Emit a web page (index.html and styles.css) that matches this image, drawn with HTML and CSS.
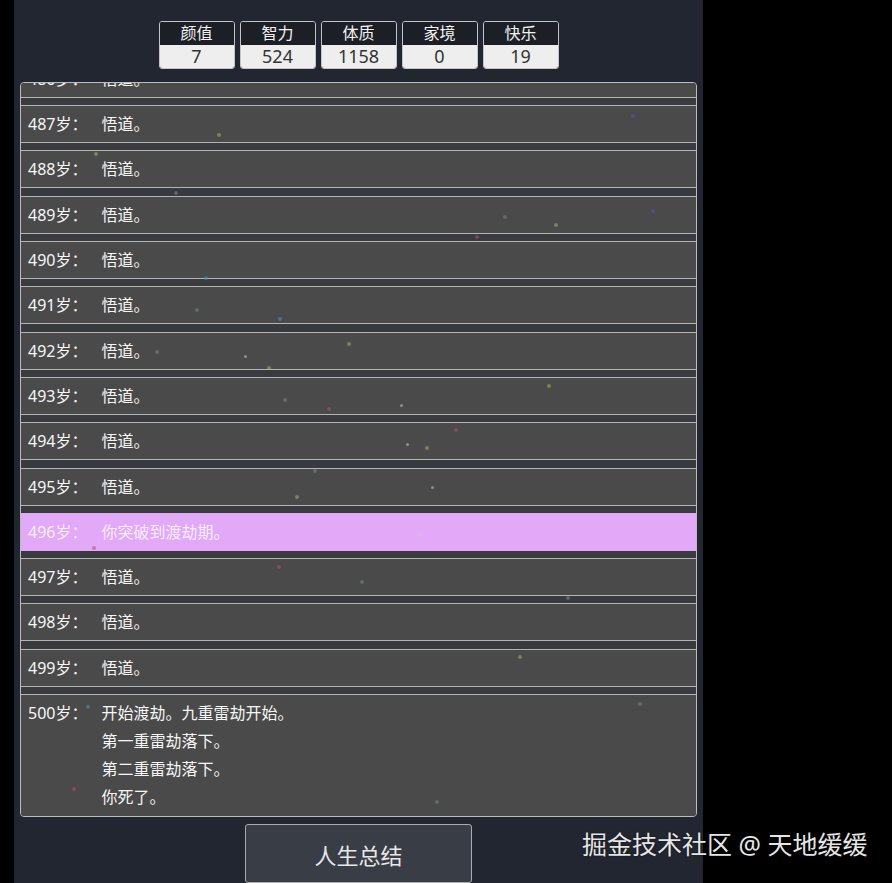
FILE: index.html
```html
<!DOCTYPE html>
<html lang="zh-CN">
<head>
<meta charset="utf-8">
<title>人生重开模拟器</title>
<link rel="stylesheet" href="styles.css">
</head>
<body>
<div class="app">
  <div class="stats">
    <div class="stat"><div class="stat-h">颜值</div><div class="stat-v">7</div></div>
    <div class="stat"><div class="stat-h">智力</div><div class="stat-v">524</div></div>
    <div class="stat"><div class="stat-h">体质</div><div class="stat-v">1158</div></div>
    <div class="stat"><div class="stat-h">家境</div><div class="stat-v">0</div></div>
    <div class="stat"><div class="stat-h">快乐</div><div class="stat-v">19</div></div>
  </div>
  <ul class="trajectory">
    <li class="item"><span class="age">486岁：</span><span class="text">悟道。</span></li>
    <li class="item"><span class="age">487岁：</span><span class="text">悟道。</span></li>
    <li class="item"><span class="age">488岁：</span><span class="text">悟道。</span></li>
    <li class="item"><span class="age">489岁：</span><span class="text">悟道。</span></li>
    <li class="item"><span class="age">490岁：</span><span class="text">悟道。</span></li>
    <li class="item"><span class="age">491岁：</span><span class="text">悟道。</span></li>
    <li class="item"><span class="age">492岁：</span><span class="text">悟道。</span></li>
    <li class="item"><span class="age">493岁：</span><span class="text">悟道。</span></li>
    <li class="item"><span class="age">494岁：</span><span class="text">悟道。</span></li>
    <li class="item"><span class="age">495岁：</span><span class="text">悟道。</span></li>
    <li class="item grade"><span class="age">496岁：</span><span class="text">你突破到渡劫期。</span></li>
    <li class="item"><span class="age">497岁：</span><span class="text">悟道。</span></li>
    <li class="item"><span class="age">498岁：</span><span class="text">悟道。</span></li>
    <li class="item"><span class="age">499岁：</span><span class="text">悟道。</span></li>
    <li class="item"><span class="age">500岁：</span><span class="text">开始渡劫。九重雷劫开始。<br>第一重雷劫落下。<br>第二重雷劫落下。<br>你死了。</span></li>
  </ul>
  <button class="summary">人生总结</button>
</div>
<div class="particles">
  <i class="p p-y" style="left:217px;top:133px"></i>
  <i class="p p-b" style="left:631px;top:114px"></i>
  <i class="p p-y" style="left:94px;top:152px"></i>
  <i class="p p-g" style="left:174px;top:191px"></i>
  <i class="p p-g" style="left:503px;top:215px"></i>
  <i class="p p-y" style="left:554px;top:223px"></i>
  <i class="p p-b" style="left:651px;top:209px"></i>
  <i class="p p-r" style="left:475px;top:235px"></i>
  <i class="p p-c" style="left:204px;top:276px"></i>
  <i class="p p-g" style="left:195px;top:308px"></i>
  <i class="p p-c" style="left:278px;top:317px"></i>
  <i class="p p-g" style="left:155px;top:350px"></i>
  <i class="p p-w" style="left:244px;top:355px"></i>
  <i class="p p-y" style="left:267px;top:366px"></i>
  <i class="p p-y" style="left:347px;top:342px"></i>
  <i class="p p-r" style="left:327px;top:407px"></i>
  <i class="p p-g" style="left:283px;top:398px"></i>
  <i class="p p-w" style="left:400px;top:404px"></i>
  <i class="p p-r" style="left:454px;top:428px"></i>
  <i class="p p-y" style="left:425px;top:446px"></i>
  <i class="p p-w" style="left:406px;top:443px"></i>
  <i class="p p-g" style="left:313px;top:469px"></i>
  <i class="p p-w" style="left:431px;top:486px"></i>
  <i class="p p-y" style="left:295px;top:495px"></i>
  <i class="p p-r" style="left:92px;top:546px"></i>
  <i class="p p-r" style="left:277px;top:565px"></i>
  <i class="p p-g" style="left:360px;top:580px"></i>
  <i class="p p-g" style="left:566px;top:596px"></i>
  <i class="p p-y" style="left:518px;top:655px"></i>
  <i class="p p-c" style="left:86px;top:705px"></i>
  <i class="p p-g" style="left:638px;top:702px"></i>
  <i class="p p-r" style="left:72px;top:787px"></i>
  <i class="p p-g" style="left:435px;top:800px"></i>
  <i class="p p-y" style="left:547px;top:384px"></i>
  <i class="p p-w" style="left:418px;top:534px"></i>
</div>
<div class="watermark">掘金技术社区 @ 天地缓缓</div>
</body>
</html>
```

FILE: styles.css
```css
html, body {
  margin: 0;
  padding: 0;
  height: 100%;
}

body {
  background: #000;
  font-family: "Noto Sans", "Noto Sans CJK SC", sans-serif;
  position: relative;
  overflow: hidden;
}

.app {
  margin-left: 14px;
  width: 689px;
  height: 883px;
  box-sizing: border-box;
  padding: 21px 6px 0;
  background: #222630;
  display: flex;
  flex-direction: column;
  align-items: center;
}

.stats {
  display: flex;
  gap: 5px;
}

.stat {
  width: 74px;
  border: 1px solid #c4c4c8;
  border-radius: 3px;
  overflow: hidden;
  text-align: center;
}

.stat-h {
  height: 23px;
  line-height: 23px;
  font-size: 16px;
  color: #f2f2f2;
  background: #1d1f27;
}

.stat-v {
  height: 23px;
  line-height: 23px;
  font-size: 18px;
  color: #333;
  background: #eeeeee;
}

.trajectory {
  list-style: none;
  margin: 13px 0 0;
  padding: 0;
  width: 100%;
  height: 735px;
  box-sizing: border-box;
  border: 1px solid #bdbdbd;
  border-radius: 4px;
  background: #393a3e;
  overflow: hidden;
  display: flex;
  flex-direction: column;
  justify-content: flex-end;
}

.item {
  flex: none;
  display: flex;
  margin-top: 7.3px;
  padding: 4px 7px;
  line-height: 28px;
  font-size: 16px;
  color: #f6f6f6;
  background: #4a4a4a;
  border-top: 1px solid #b4b4b4;
  border-bottom: 1px solid #b4b4b4;
}

.item:last-child {
  border-bottom: none;
  padding-bottom: 5px;
}

.item.grade {
  background: #e2a9f9;
  border-color: #e2a9f9;
  color: #f9ecfd;
}

.age {
  white-space: nowrap;
  margin-right: 14px;
}

.summary {
  margin-top: 7px;
  width: 227px;
  height: 59px;
  flex: none;
  border: 1px solid #a9abb0;
  border-radius: 3px;
  background: #393d46;
  color: #e8e8e8;
  font-family: inherit;
  font-size: 22px;
}

.particles {
  position: absolute;
  left: 0;
  top: 0;
  width: 703px;
  height: 883px;
  pointer-events: none;
}

.p {
  position: absolute;
  width: 4px;
  height: 4px;
  border-radius: 50%;
  opacity: 0.55;
}

.p-y { background: #a8b45a; }
.p-b { background: #5a4cc8; }
.p-g { background: #6f8a7c; }
.p-r { background: #b4506e; }
.p-c { background: #3c9fb0; }
.p-w { background: #c8c8c8; width: 3px; height: 3px; }

.watermark {
  position: absolute;
  left: 582px;
  top: 827px;
  font-size: 25px;
  line-height: 34px;
  color: #e6e6e6;
  white-space: nowrap;
  text-shadow: 0 0 2px rgba(0, 0, 0, 0.6);
}
```
